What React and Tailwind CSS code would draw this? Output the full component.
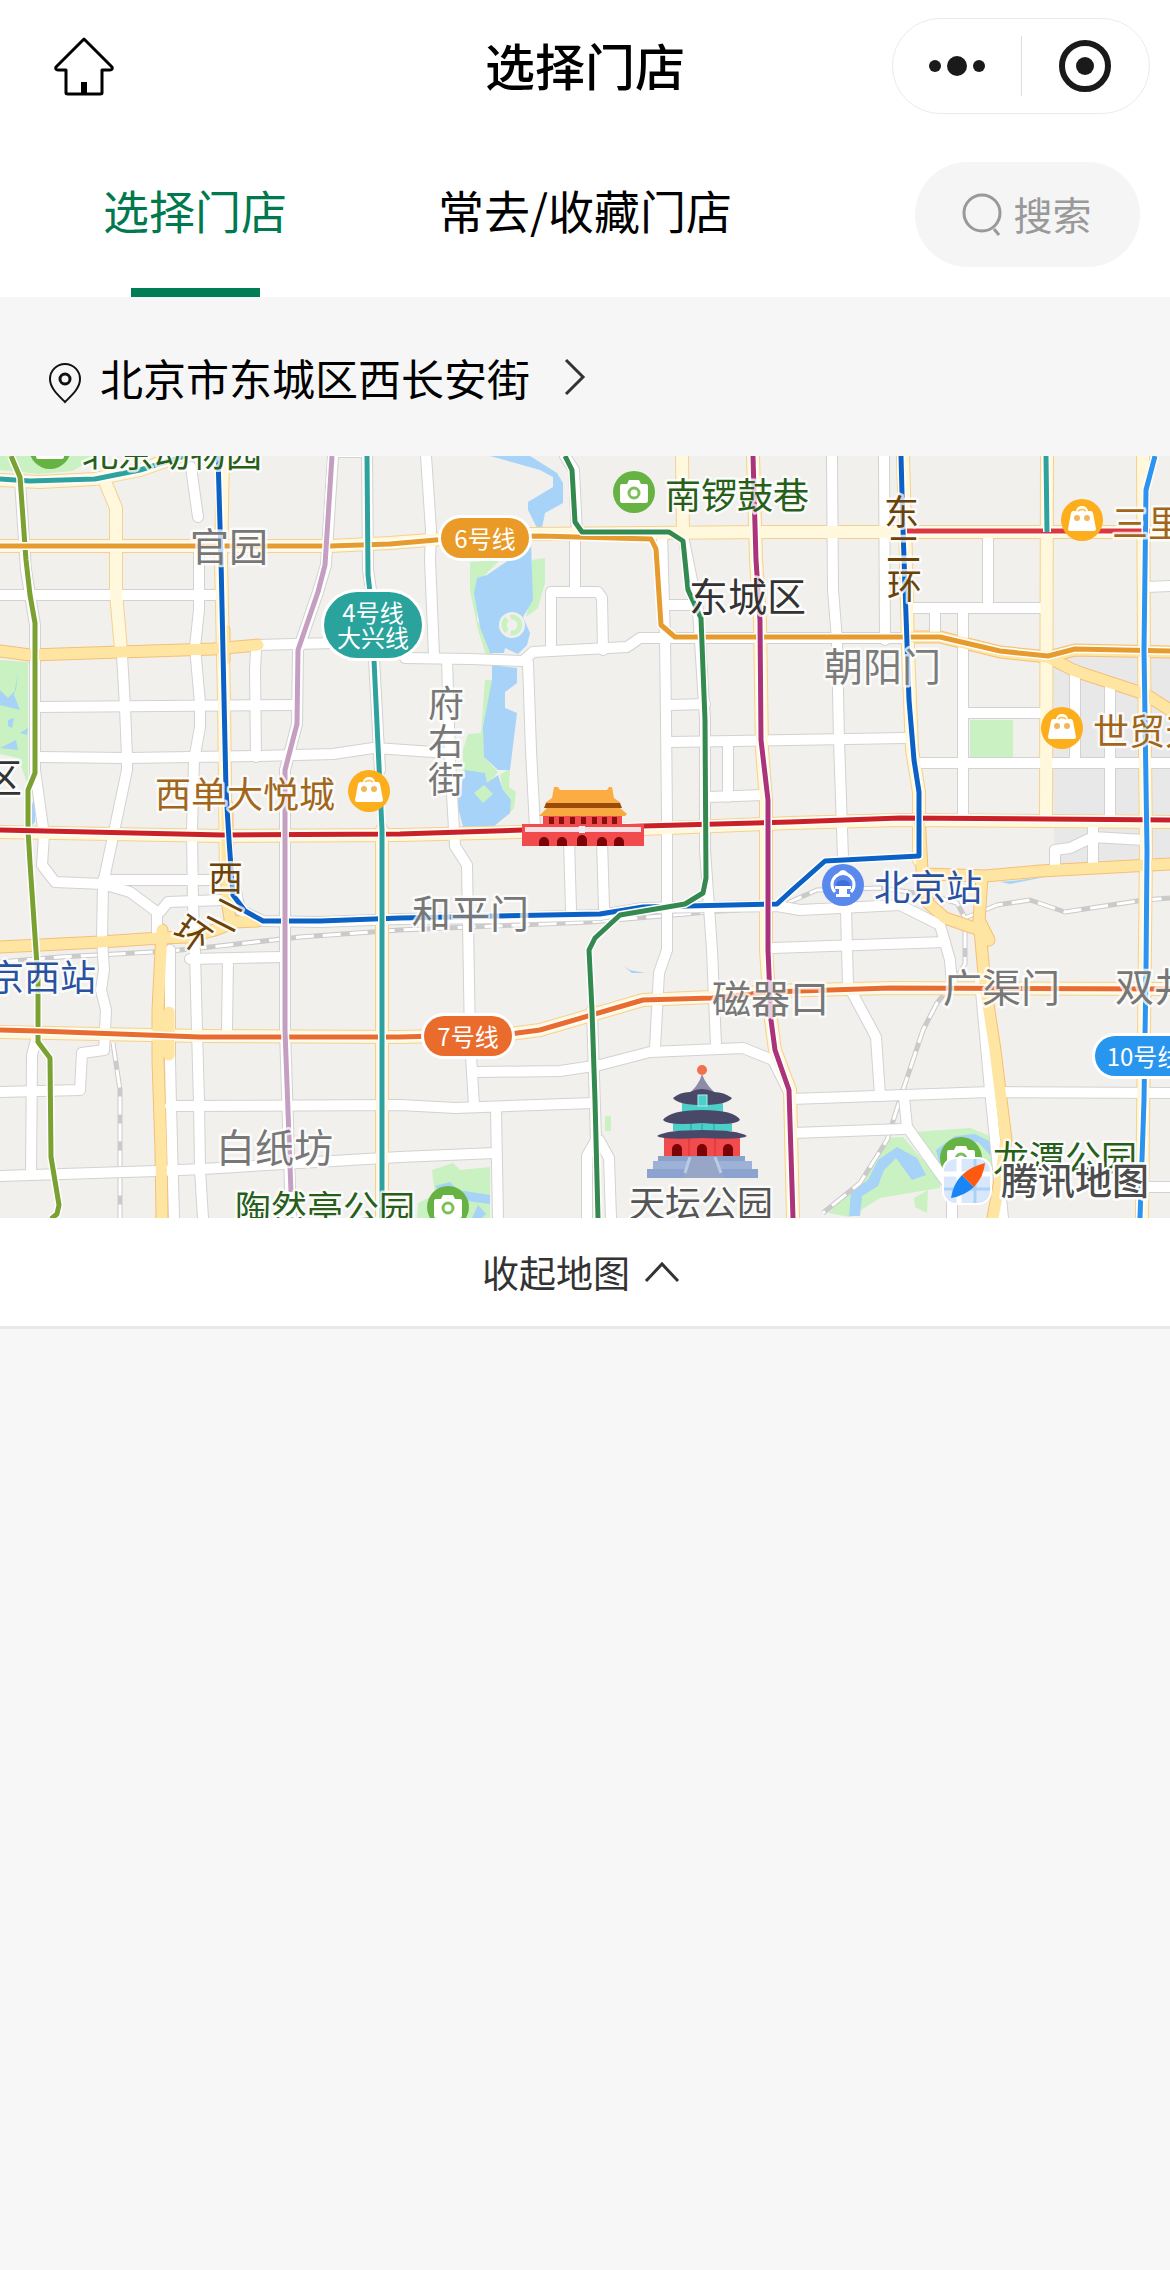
import React, { useState } from "react";

// Map data, everything in map units
const whiteRoads = [
  "M20 480 L26 570 L35 625 L35 770 L44 835 L42 865 L55 882 L103 884",
  "M191 467 L198 517",
  "M199 546 L199 610 L195 647 L200 703 L200 727 L194 760 L192 830 L193 903 L195 953 L197 1030 L199 1102 L200 1170 L203 1218",
  "M0 595 L217 595",
  "M122 655 L125 707 L127 757 L127 770 L115 827 L103 884 L102 940 L104 970 L101 990 L106 1010 L105 1030 L104 1050 L82 1053 L80 1090 L0 1092",
  "M36 707 L293 705",
  "M38 757 L127 758 L260 756 L333 754 L373 748 L390 749 L447 753",
  "M256 645 L373 642",
  "M256 650 L255 670 L256 757",
  "M333 456 L326 565 L318 592 L298 650 L297 724 L285 770 L285 1030 L291 1218",
  "M333 452 L367 452 L368 570 L371 590 L373 640 L380 770",
  "M103 880 L215 880",
  "M106 885 L130 892 L157 912 L157 935",
  "M160 912 L168 902 L222 900",
  "M190 959 L283 957",
  "M228 960 L227 1030",
  "M170 950 L170 1060 L171 1106 L174 1218",
  "M170 1106 L400 1105 L455 1108 L593 1103",
  "M0 1176 L157 1171 L203 1169 L300 1163 L400 1157 L495 1153",
  "M36 1040 L32 1055 L31 1175",
  "M229 860 L240 910 L263 921 L320 922 L400 919 L500 918 L600 915 L643 908 L777 906 L800 910 L900 905 L940 925 L950 960 L952 985",
  "M426 456 L431 530 L430 560 L434 655",
  "M405 658 L470 659 L523 661 L533 652 L627 647 L640 638 L907 638",
  "M447 660 L450 760 L455 846 L467 865 L470 1040 L474 1105",
  "M528 663 L531 750 L535 828",
  "M575 534 L575 592 M551 650 L551 592 L598 592 L602 598 L603 650",
  "M565 456 L574 470 L577 534",
  "M662 534 L665 640 L666 720 L667 820 L667 950 L659 973 L655 1048",
  "M683 536 L698 610 L705 720 L705 850 L712 950 L716 1045",
  "M670 605 L695 605 M670 705 L705 704 M670 742 L905 738",
  "M728 742 L728 797 M708 797 L764 795",
  "M832 456 L833 590 L837 640 L839 740 L843 858",
  "M884 456 L885 640",
  "M988 534 L988 608 M913 608 L1046 608 M963 608 L963 818 M935 608 L935 635",
  "M965 713 L1046 713 M916 763 L1170 763",
  "M1075 670 L1075 763 M1110 685 L1110 820 M1146 587 L1170 586",
  "M1055 867 L1055 850 L1070 848 L1093 837 L1144 840 M1093 820 L1093 867",
  "M773 948 L945 942 M846 910 L848 985 L876 1037 L880 1096",
  "M791 1099 L990 1092 L1170 1093 M793 1133 L903 1129",
  "M904 1097 L907 1127 L952 1190 L952 1218",
  "M980 980 L990 1090 L1003 1218 M1144 1187 L1170 1187",
  "M478 1072 L560 1071 L600 1065 L650 1052 L743 1048 L773 1060 L789 1092",
  "M496 1110 L498 1218",
  "M569 840 L571 910 M602 840 L604 908",
  "M592 1010 L596 1140 L587 1156 L587 1218 M599 1140 L609 1158 L611 1218",
];

const lightRoads = [
  "M0 480 L40 482 L95 479 L140 470 L180 456",
  "M106 484 L116 508 L116 593 L121 650",
  "M0 546 L330 546 L390 543 L470 537 L530 534 L770 532 L1170 532",
  "M223 456 L221 560 L224 700 L226 880",
  "M682 456 L683 534",
  "M753 456 L756 560 L760 620 L762 750 L766 800 L766 950 L771 1020 L775 1050 L790 1090 L793 1218",
  "M903 456 L906 560 L908 650 L912 750 L919 792 L919 860",
  "M1047 456 L1046 820",
  "M1143 456 L1144 650 L1146 850 L1142 1218",
  "M0 832 L223 836 L400 835 L643 829 L790 823 L900 820 L1170 822",
  "M382 830 L382 1218",
  "M0 1032 L200 1036 L400 1037 L510 1034 L540 1030 L643 1000 L712 997 L770 991 L890 988 L1170 989",
];

const deepRoads = [
  "M0 651 L30 655 L120 652 L213 649 L258 645",
  "M224 630 L224 660 M227 805 L227 900 L231 925",
  "M0 947 L100 942 L160 938 L187 937 L215 930 L235 922 L257 921",
  "M162 930 L158 1010 L158 1060 L161 1150 L162 1218 M169 1012 L169 1055",
  "M910 637 L940 637 L1000 652 L1048 657 L1075 650 L1170 652",
  "M1050 658 L1075 671 L1145 694 L1170 710",
  "M919 815 L922 870 L928 903 L945 918 L980 930 L985 985 L995 1050 L1006 1140 L1000 1180 L993 1218",
  "M925 874 L985 876 L1040 871 L1170 864",
  "M982 878 L979 920 L989 940",
];

const rails = [
  "M0 962 L60 957 L170 951 L210 947 L300 937 L400 930 L590 922 L720 911 L740 910",
  "M113 1043 L120 1090 L120 1218",
  "M785 904 L817 890 L880 888 L930 895 L957 903 L965 918 L997 905 L1030 900 L1065 912 L1144 900 L1170 898",
  "M965 930 L965 964 L955 980 L937 1003 L923 1030 L903 1090 L887 1140 L860 1183 L823 1213",
];

const parks = [
  "M0 456 L100 456 L72 471 L40 474 L0 470 Z",
  "M0 660 L28 662 L28 785 L18 758 L0 754 Z",
  "M470 562 L500 560 L480 580 L477 620 L494 655 L486 655 L478 630 L470 590 Z",
  "M532 560 L545 558 L545 583 L538 608 L526 617 L530 600 Z",
  "M485 680 L492 680 L484 757 L498 772 L488 784 L463 770 L463 750 L468 734 L481 733 Z",
  "M500 775 L510 768 L509 787 L516 792 L514 808 L508 815 Z",
  "M970 720 L1013 720 L1013 758 L970 758 Z",
  "M605 1116 L611 1116 L611 1131 L605 1131 Z",
  "M432 1170 L453 1163 L460 1170 L490 1167 L490 1218 L417 1218 L418 1203 L435 1195 Z",
  "M888 1138 L903 1137 L940 1180 L940 1188 L897 1195 L880 1198 L850 1217 L828 1213 L860 1185 Z",
  "M915 1132 L970 1128 L995 1138 L996 1165 L955 1182 L936 1160 Z",
  "M914 1198 L928 1190 L927 1213 L915 1207 Z",
];

const waters = [
  "M490 456 L530 456 L557 473 L563 483 L563 503 L545 513 L542 528 L537 528 L528 510 L528 502 L553 487 L553 477 L540 470 Z",
  "M531 540 L531 547 L512 558 L487 575 L477 578 L474 593 L480 627 L490 653 L504 653 L505 648 L518 654 L527 645 L530 633 L523 617 L533 600 L532 573 Z",
  "M492 665 L517 668 L517 683 L505 692 L505 708 L517 713 L510 770 L498 770 L484 757 L483 727 L492 680 Z",
  "M465 770 L485 773 L487 783 L498 775 L503 790 L511 800 L510 813 L493 827 L463 827 L457 803 Z",
  "M0 690 L8 698 L16 690 L18 672 L14 695 L20 710 L0 705 Z M8 720 L14 718 L12 728 L8 726 Z M0 748 L16 740 L18 750 Z M20 733 L28 728 L27 735 Z",
  "M32 805 L35 795 L35 822 L32 825 Z",
  "M435 1186 L450 1182 L458 1190 L490 1195 L490 1204 L460 1200 L440 1192 Z M478 1205 L486 1214 L482 1218 L472 1218 Z",
  "M849 1216 L851 1192 L868 1180 L878 1160 L897 1147 L917 1158 L926 1175 L912 1180 L896 1158 L884 1170 L878 1186 L862 1196 L860 1216 Z",
  "M936 1150 L955 1136 L975 1134 L997 1145 L993 1158 L978 1142 L950 1142 L940 1165 Z",
  "M1000 882 L1020 880 L1050 876 L1010 884 Z",
  "M624 966 L630 970 L645 973 L632 973 Z",
];

const metroLines = [
  { color: "#2fa29d", d: "M0 479 L30 481 L95 479 L140 470 L185 456" },
  { color: "#7aa131", d: "M11 456 L20 477 L26 560 L30 595 L35 623 L35 773 L28 790 L28 830 L30 863 L38 980 L38 1042 L50 1058 L51 1157 L59 1205 L57 1214 L51 1219" },
  { color: "#e69b2f", d: "M0 546 L330 546 L390 544 L470 537 L540 536 L651 539 L656 549 L661 625 L675 637 L940 637 L1000 651 L1048 656 L1075 649 L1170 651" },
  { color: "#d9383f", d: "M903 531 L1150 531" },
  { color: "#2fa29d", d: "M1046 456 L1047 532" },
  { color: "#c92127", d: "M0 830 L223 835 L400 834 L643 826 L790 822 L900 818 L1170 820" },
  { color: "#e86c30", d: "M0 1030 L38 1031 L200 1037 L400 1037 L510 1034 L540 1030 L643 1000 L712 998 L770 992 L890 988 L1170 989" },
  { color: "#0b62c4", d: "M218 456 L221 560 L226 790 L229 840 L233 895 L245 911 L263 921 L320 921 L400 918 L600 914 L643 907 L777 904 L790 892 L825 861 L919 856 L919 792 L914 760 L909 700 L903 530 L901 456" },
  { color: "#c49fc2", d: "M332 456 L325 565 L318 592 L298 650 L297 724 L285 770 L285 1030 L291 1192" },
  { color: "#2fa29d", d: "M367 456 L368 575 L372 610 L374 660 L382 830 L382 1218" },
  { color: "#34894f", d: "M565 456 L572 470 L575 522 L582 532 L669 532 L683 541 L688 590 L701 618 L705 720 L706 878 L703 893 L685 904 L620 915 L595 938 L589 950 L592 1010 L595 1100 L598 1218" },
  { color: "#aa3379", d: "M753 456 L756 560 L760 620 L761 740 L768 800 L768 950 L771 1020 L775 1050 L789 1090 L793 1218" },
  { color: "#2c93ee", d: "M1155 456 L1146 490 L1144 650 L1147 850 L1146 970 L1144 1100 L1140 1218" },
];

const labels = [
  { text: "北京动物园", x: 82, y: 467, size: 36, color: "#275f1a" },
  { text: "官园", x: 190, y: 561, size: 39, color: "#777777" },
  { text: "南锣鼓巷", x: 665, y: 509, size: 36, color: "#275f1a" },
  { text: "东城区", x: 689, y: 611, size: 39, color: "#333333" },
  { text: "朝阳门", x: 824, y: 681, size: 39, color: "#7b7b7b" },
  { text: "三里屯", x: 1112, y: 537, size: 36, color: "#a1661a" },
  { text: "世贸天阶", x: 1093, y: 745, size: 36, color: "#a1661a" },
  { text: "西单大悦城", x: 155, y: 808, size: 36, color: "#a1661a" },
  { text: "北京站", x: 874, y: 901, size: 36, color: "#2951a3" },
  { text: "京西站", x: -12, y: 991, size: 36, color: "#2951a3" },
  { text: "区", x: -17, y: 792, size: 39, color: "#333333" },
  { text: "和平门", x: 412, y: 928, size: 39, color: "#777777" },
  { text: "磁器口", x: 712, y: 1013, size: 39, color: "#777777" },
  { text: "广渠门", x: 943, y: 1002, size: 39, color: "#777777" },
  { text: "双井", x: 1115, y: 1001, size: 39, color: "#777777" },
  { text: "白纸坊", x: 216, y: 1162, size: 39, color: "#777777" },
  { text: "陶然亭公园", x: 235, y: 1222, size: 36, color: "#275f1a" },
  { text: "天坛公园", x: 629, y: 1217, size: 36, color: "#555555" },
  { text: "龙潭公园", x: 993, y: 1172, size: 36, color: "#275f1a" },
  { text: "府", x: 428, y: 717, size: 36, color: "#777777" },
  { text: "右", x: 428, y: 755, size: 36, color: "#777777" },
  { text: "街", x: 428, y: 793, size: 36, color: "#777777" },
  { text: "东", x: 884, y: 525, size: 35, color: "#6b4208" },
  { text: "二", x: 886, y: 562, size: 35, color: "#6b4208" },
  { text: "环", x: 887, y: 599, size: 35, color: "#6b4208" },
  { text: "西", x: 208, y: 891, size: 35, color: "#6b4208" },
];

const tiltedLabels = [
  { text: "二", x: 226, y: 914, angle: 27 },
  { text: "环", x: 193, y: 934, angle: 35 },
];

const badges = [
  { lines: ["6号线"], x: 441, y: 518, w: 88, h: 40, color: "#e99a27" },
  { lines: ["4号线", "大兴线"], x: 324, y: 592, w: 98, h: 66, color: "#2aa39d" },
  { lines: ["7号线"], x: 424, y: 1016, w: 88, h: 40, color: "#ea6c2d" },
  { lines: ["10号线"], x: 1095, y: 1036, w: 98, h: 40, color: "#2896ef" },
];

const CameraMark = ({ x, y }) => (
  <g transform={`translate(${x} ${y})`}>
    <circle r="21" fill="#66b344" />
    <path
      d="M-12 -8 H-7 L-5 -12 H5 L7 -8 H12 Q14 -8 14 -6 V8 Q14 11 12 11 H-12 Q-14 11 -14 8 V-6 Q-14 -8 -12 -8 Z"
      fill="#fff"
    />
    <circle cy="1" r="5" fill="none" stroke="#7cc05d" strokeWidth="3" />
  </g>
);

const BagMark = ({ x, y }) => (
  <g transform={`translate(${x} ${y})`}>
    <circle r="21" fill="#fcae1c" />
    <path
      d="M-6 -9 Q-5 -14 0 -14 Q5 -14 6 -9 H9 Q10 -9 11 -7 L14 9 Q14 11 11 11 H-11 Q-14 11 -14 9 L-11 -7 Q-10 -9 -9 -9 Z"
      fill="#fff"
    />
    <path d="M-4 -9 Q0 -12 4 -9" fill="none" stroke="#fcc765" strokeWidth="2" />
    <circle cx="-5" cy="-2" r="3" fill="#f0b857" />
    <circle cx="5" cy="-2" r="3" fill="#f0b857" />
  </g>
);

const TrainMark = ({ x, y }) => (
  <g transform={`translate(${x} ${y})`}>
    <circle r="21" fill="#5a89ee" />
    <path
      d="M-8 7 A11 11 0 1 1 8 7"
      fill="none"
      stroke="#fff"
      strokeWidth="3"
    />
    <path d="M-5 -12 Q0 -18 5 -12 Z" fill="#fff" />
    <path d="M-7 1 Q-7 -5 0 -5 Q7 -5 7 1 Z" fill="#3f6fd8" />
    <path d="M-8 1 H8 V4 H4 V9 H7 V12 H-7 V9 H-4 V4 H-8 Z" fill="#fff" />
  </g>
);

const Gate = () => (
  <g>
    <rect x="543" y="815" width="79" height="10" fill="#f24b4e" />
    {[551, 561, 572, 583, 594, 604, 614].map((x) => (
      <rect key={x} x={x - 2} y="817" width="5" height="7" fill="#86100c" />
    ))}
    <path d="M539 816 L547 808 H620 L627 814 L625 816 Z" fill="#f8a93f" />
    <path d="M546 803 H620 L622 808 H544 Z" fill="#9a4b0b" />
    <path
      d="M554 787 H558 L560 790 H607 L609 787 H612 L614 798 L621 803 H545 L552 798 Z"
      fill="#fbad44"
    />
    <rect x="522" y="824" width="122" height="22" fill="#f24b4e" />
    <rect x="525" y="827" width="116" height="5" fill="#f6dfe4" />
    <rect x="579" y="826" width="6" height="7" fill="#eceff5" />
    {[544, 562, 602, 619].map((x) => (
      <path key={x} d={`M${x - 5} 846 V842 A5 5 0 0 1 ${x + 5} 842 V846 Z`} fill="#7b0305" />
    ))}
    <path d="M577 846 V840 A5 5 0 0 1 587 840 V846 Z" fill="#7b0305" />
  </g>
);

const Temple = () => (
  <g>
    <path d="M702 1074 Q706 1086 719 1096 H686 Q699 1086 702 1074 Z" fill="#8d8ba8" />
    <circle cx="702" cy="1070" r="5" fill="#f2704d" />
    <rect x="682" y="1100" width="41" height="12" fill="#4ccfc8" />
    <path d="M673 1098 Q680 1092 690 1092 Q702 1086 714 1092 Q724 1092 732 1098 Q727 1105 702 1105 Q678 1105 673 1098 Z" fill="#4a4868" />
    <rect x="698" y="1095" width="9" height="11" fill="#4ccfc8" stroke="#a9f2ec" strokeWidth="1" />
    <rect x="673" y="1118" width="59" height="13" fill="#4ccfc8" />
    <path d="M691 1122 V1130 M702 1122 V1130 M714 1122 V1130" stroke="#2d9c98" strokeWidth="1" />
    <path d="M663 1120 Q670 1110 702 1110 Q735 1110 740 1120 Q735 1126 702 1123 Q668 1126 663 1120 Z" fill="#4a4868" />
    <rect x="664" y="1134" width="76" height="22" fill="#f24b4e" />
    <path d="M689 1138 V1156 M715 1138 V1156" stroke="#d62f35" strokeWidth="1" />
    <path d="M657 1136 Q666 1130 702 1130 Q738 1130 747 1136 Q742 1140 702 1138 Q662 1140 657 1136 Z" fill="#4a4868" />
    {[677, 702, 728].map((x) => (
      <path key={x} d={`M${x - 5} 1156 V1149 A5 5 0 0 1 ${x + 5} 1149 V1156 Z`} fill="#7b0305" />
    ))}
    <rect x="658" y="1156" width="87" height="5" fill="#8aa2c8" />
    <rect x="653" y="1161" width="99" height="8" fill="#9db2d6" />
    <rect x="647" y="1169" width="111" height="9" fill="#8ba3ce" />
    <path d="M692 1157 H713 L724 1178 H682 Z" fill="#97a6c6" />
    <path d="M690 1157 L685 1173 M715 1157 L721 1173" stroke="#b9cbe6" strokeWidth="3" />
  </g>
);

const MapLogo = () => (
  <g>
    <rect x="942" y="1157" width="50" height="48" rx="14" fill="#fff" />
    <rect x="944" y="1159" width="46" height="44" rx="12" fill="#d8e7fb" />
    <path d="M959 1159 V1203 M944 1174 H990" stroke="#fff" strokeWidth="5" />
    <path d="M975 1159 V1203 M944 1189 H990" stroke="#a9d3f6" strokeWidth="3" />
    <path d="M951 1198 Q953 1184 962 1175 L974 1187 Q964 1196 951 1198 Z" fill="#1a86f5" />
    <path d="M985 1163 Q972 1166 962 1175 L974 1187 Q984 1176 985 1163 Z" fill="#fd5a10" />
  </g>
);

const StoreMap = () => (
  <svg
    className="block w-full h-[762px]"
    viewBox="0 456 1170 762"
    preserveAspectRatio="xMidYMid slice"
    role="img"
    aria-label="门店地图"
    fontFamily='"Noto Sans CJK SC", sans-serif'
  >
    <rect x="0" y="456" width="1170" height="762" fill="#f1f0ed" />
    <path d="M1050 658 L1170 652 V864 H1055 Z" fill="#e8e8e8" />
    {parks.map((d) => (
      <path key={d} d={d} fill="#c9f1c1" />
    ))}
    {waters.map((d) => (
      <path key={d} d={d} fill="#a6d3f7" />
    ))}
    <circle cx="512" cy="625" r="13" fill="#f1f0ed" />
    <circle cx="512" cy="625" r="8" fill="none" stroke="#c9f1c1" strokeWidth="5" strokeDasharray="14 4" />
    <path d="M484 785 L493 794 L483 803 L474 793 Z" fill="#c9f1c1" />

    <g fill="none" strokeLinejoin="round">
      {/* Railways */}
      {rails.map((d) => (
        <g key={d}>
          <path d={d} stroke="#cacaca" strokeWidth="5" />
          <path d={d} stroke="#fff" strokeWidth="3" strokeDasharray="18 9" />
        </g>
      ))}

      {/* Road casings */}
      <g strokeLinecap="round">
        {whiteRoads.map((d) => (
          <path key={d} d={d} stroke="#d2d2d2" strokeWidth="12" />
        ))}
        {lightRoads.map((d) => (
          <path key={d} d={d} stroke="#f4d191" strokeWidth="14" />
        ))}
        {deepRoads.map((d) => (
          <path key={d} d={d} stroke="#f5bf77" strokeWidth="13" />
        ))}

        {/* Road surfaces */}
        {whiteRoads.map((d) => (
          <path key={d} d={d} stroke="#fff" strokeWidth="10" />
        ))}
        {lightRoads.map((d) => (
          <path key={d} d={d} stroke="#fff8dc" strokeWidth="12" />
        ))}
        {deepRoads.map((d) => (
          <path key={d} d={d} stroke="#ffe5a2" strokeWidth="11" />
        ))}
      </g>

      {/* Metro lines */}
      {metroLines.map(({ color, d }) => (
        <g key={d}>
          <path d={d} stroke="#fff" strokeWidth="8" />
          <path d={d} stroke={color} strokeWidth="5" />
        </g>
      ))}
    </g>

    <CameraMark x={50} y={448} />
    <CameraMark x={634} y={492} />
    <CameraMark x={448} y={1207} />
    <CameraMark x={961} y={1158} />
    <BagMark x={369} y={791} />
    <BagMark x={1082} y={520} />
    <BagMark x={1062} y={728} />
    <TrainMark x={843} y={885} />
    <Gate />
    <Temple />

    {/* Place names */}
    <g stroke="#fff" strokeOpacity="0.75" strokeWidth="5" strokeLinejoin="round" paintOrder="stroke">
      {labels.map(({ text, x, y, size, color }) => (
        <text key={`${text}-${x}-${y}`} x={x} y={y} fontSize={size} fill={color}>
          {text}
        </text>
      ))}
      {tiltedLabels.map(({ text, x, y, angle }) => (
        <text
          key={text}
          transform={`translate(${x} ${y}) rotate(${angle})`}
          y="13"
          textAnchor="middle"
          fontSize="35"
          fill="#6b4208"
        >
          {text}
        </text>
      ))}
    </g>

    {/* Metro line badges */}
    {badges.map(({ lines, x, y, w, h, color }) => (
      <g key={lines[0]}>
        <rect
          x={x}
          y={y}
          width={w}
          height={h}
          rx={h / 2}
          fill={color}
          stroke="#fff"
          strokeWidth="6"
          paintOrder="stroke"
        />
        {lines.map((line, i) => (
          <text key={line} x={x + w / 2} y={y + 30 + i * 25} textAnchor="middle" fontSize="24" fill="#fff">
            {line}
          </text>
        ))}
      </g>
    ))}

    <MapLogo />
    <text
      x="1001"
      y="1195"
      fontSize="37"
      fontWeight="500"
      fill="#4d4d4d"
      stroke="#fff"
      strokeWidth="5"
      strokeLinejoin="round"
      paintOrder="stroke"
    >
      腾讯地图
    </text>
  </svg>
);

const tabs = ["选择门店", "常去/收藏门店"];

const App = () => {
  const [activeTab, setActiveTab] = useState(0);
  const [showMap, setShowMap] = useState(true);
  const [keyword, setKeyword] = useState("");

  return (
    <div className="min-h-screen bg-[#f7f7f7] font-['Noto_Sans_CJK_SC',sans-serif] text-black">
      <div className="bg-white">
        {/* Title bar */}
        <header className="grid grid-cols-[1fr_auto_1fr] items-center h-[132px]">
          <button aria-label="首页" className="justify-self-start ml-[54px] cursor-pointer">
            <svg width="60" height="60" viewBox="0 0 60 60" fill="none" stroke="#000" strokeWidth="3" strokeLinejoin="round">
              <path d="M30 3 L58 31 Q59 34 56 34 H48 V57 Q48 58 46 58 H14 Q12 58 12 57 V34 H4 Q1 34 2 31 Z" />
              <path d="M30 46 V58" strokeWidth="6" />
            </svg>
          </button>
          <h1 className="pb-1 text-[50px] leading-[72px] font-medium">选择门店</h1>
          <div className="justify-self-end mr-5 flex items-center w-[258px] h-24 rounded-full border border-[#ebebeb]">
            <button aria-label="更多" className="flex-1 flex justify-center cursor-pointer">
              <svg width="58" height="22" viewBox="0 0 58 22" fill="#1a1a1a">
                <circle cx="7" cy="11" r="6" />
                <circle cx="29" cy="11" r="10" />
                <circle cx="51" cy="11" r="6" />
              </svg>
            </button>
            <span className="w-px h-[60px] bg-[#dedede]" />
            <button aria-label="关闭" className="flex-1 flex justify-center cursor-pointer">
              <svg width="52" height="52" viewBox="0 0 52 52">
                <circle cx="26" cy="26" r="23" fill="none" stroke="#1a1a1a" strokeWidth="6" />
                <circle cx="26" cy="26" r="9" fill="#1a1a1a" />
              </svg>
            </button>
          </div>
        </header>

        {/* Tabs and search */}
        <nav className="grid grid-cols-3 h-[165px]">
          {tabs.map((tab, index) => (
            <button
              key={tab}
              onClick={() => setActiveTab(index)}
              className={`flex flex-col items-center justify-between pt-11 text-[46px] leading-[66px] whitespace-nowrap cursor-pointer ${
                activeTab === index ? "text-[#00794f]" : "text-black"
              }`}
            >
              {tab}
              <span
                className={`w-[129px] h-[9px] ${activeTab === index ? "bg-[#007d54]" : ""}`}
              />
            </button>
          ))}
          <label className="justify-self-end flex items-center justify-center gap-3 w-[225px] h-[105px] mt-[30px] mr-[30px] rounded-full bg-[#f5f5f5]">
            <svg width="40" height="44" viewBox="0 0 40 44" fill="none" stroke="#999" strokeWidth="3">
              <circle cx="20" cy="20" r="18" />
              <path d="M32 36 L37 42" />
            </svg>
            <input
              type="text"
              aria-label="搜索"
              placeholder="搜索"
              value={keyword}
              onChange={(e) => setKeyword(e.target.value)}
              className="w-20 pb-1 text-[39px] leading-[56px] bg-transparent outline-none placeholder:text-[#999]"
            />
          </label>
        </nav>
      </div>

      {/* Current address */}
      <button className="flex items-center w-full h-[159px] pl-12 bg-[#f6f6f6] text-[43px] leading-[62px] cursor-pointer">
        <svg className="mt-3" width="34" height="42" viewBox="0 0 34 42" fill="none" stroke="#111" strokeWidth="2">
          <path d="M17 40 C10 33 2 26 2 17 A15 15 0 0 1 32 17 C32 26 24 33 17 40 Z" />
          <circle cx="17" cy="17" r="5" strokeWidth="3" />
        </svg>
        <span className="ml-[18px]">北京市东城区西长安街</span>
        <svg className="ml-[34px]" width="22" height="38" viewBox="0 0 22 38" fill="none" stroke="#333" strokeWidth="3">
          <path d="M2 2 L19 19 L2 36" />
        </svg>
      </button>

      {showMap && <StoreMap />}

      {/* Map toggle */}
      <button
        onClick={() => setShowMap((prev) => !prev)}
        className="flex items-center justify-center gap-[14px] w-full h-[111px] pr-2 border-b-3 border-[#e8e8e8] bg-white text-[37px] leading-[54px] text-[#333] cursor-pointer"
      >
        {showMap ? "收起地图" : "展开地图"}
        <svg
          className={showMap ? "" : "rotate-180"}
          width="36"
          height="22"
          viewBox="0 0 36 22"
          fill="none"
          stroke="#333"
          strokeWidth="3"
        >
          <path d="M2 20 L18 3 L34 20" />
        </svg>
      </button>
    </div>
  );
};

export default App;
